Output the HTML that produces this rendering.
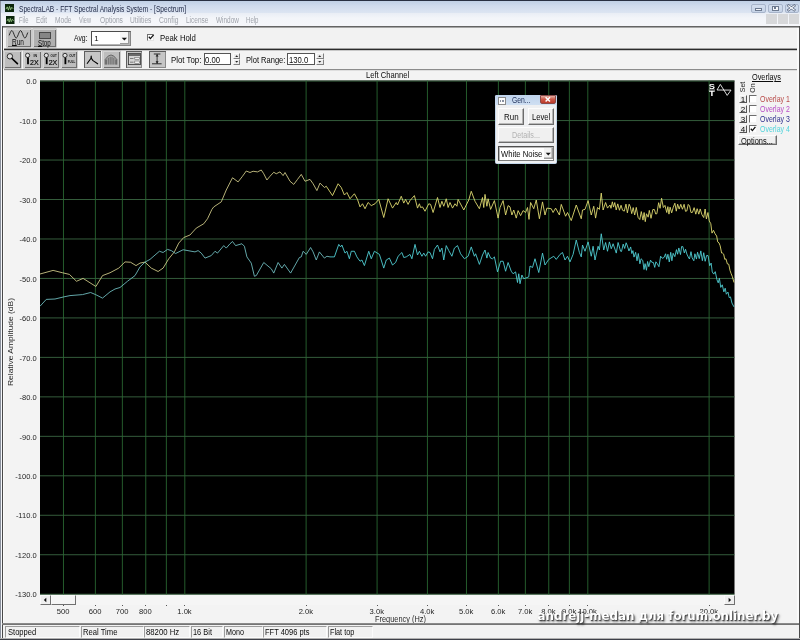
<!DOCTYPE html>
<html>
<head>
<meta charset="utf-8">
<title>SpectraLAB - FFT Spectral Analysis System - [Spectrum]</title>
<style>
html,body{margin:0;padding:0;}
body{width:800px;height:640px;overflow:hidden;background:#f3f3f3;position:relative;font-family:"Liberation Sans",sans-serif;font-size:8px;color:#222;}
#root{position:absolute;left:0;top:0;width:800px;height:640px;overflow:hidden;will-change:transform;}
.abs{position:absolute;}
.t{position:absolute;white-space:nowrap;line-height:10px;}
u{text-underline-offset:0.3px;text-decoration-thickness:0.7px;}
.btn{position:absolute;background:#bdbdbd;box-shadow:inset 1px 1px 0 #d4d4d4, inset -1px -1px 0 #6e6e6e, 0 0 0 0.5px #a4a4a4;}
.inp{position:absolute;background:#fff;border:1px solid #555;box-sizing:border-box;}
.st{position:absolute;top:626px;height:11.8px;box-sizing:border-box;border:1px solid;border-color:#9c9c9c #fbfbfb #fbfbfb #9c9c9c;background:#f1f1f1;}
.nb{position:absolute;left:739px;width:8px;height:7.5px;box-sizing:border-box;border:1px solid;border-color:#fafafa #555 #555 #fafafa;background:#ececec;}
.cb{position:absolute;left:749px;width:8px;height:7.5px;box-sizing:border-box;border:1px solid;border-color:#6e6e6e #f4f4f4 #f4f4f4 #6e6e6e;background:#fff;}
.gbtn{position:absolute;box-sizing:border-box;border:1px solid;border-color:#fdfdfd #6c6c6c #6c6c6c #fdfdfd;background:#f0f0f0;box-shadow:inset -0.8px -0.8px 0 #a6a6a6;}
</style>
</head>
<body>
<div id="root">
<div class="abs" style="left:0;top:0;width:800px;height:13px;background:linear-gradient(#bccde4,#cfdbed 45%,#dde5f2)"></div><div class="abs" style="left:0;top:0;width:800px;height:1.3px;background:#283042"></div><div class="abs" style="left:0;top:13px;width:800px;height:13px;background:linear-gradient(#e9edf5,#f3f5f9 40%,#f5f6fa)"></div><div class="t" style="left:18.50px;top:3.50px;font-size:8.4px;color:#222b48;transform:scaleX(0.7892);transform-origin:0 0;">SpectraLAB - FFT Spectral Analysis System - [Spectrum]</div><svg class="abs" style="left:4.5px;top:3.5px" width="9" height="8.5" viewBox="0 0 10 9" preserveAspectRatio="none"><rect width="10" height="9" fill="#0b260c"/><path d="M1 5.5 L2.5 3 L3.8 6.5 L5 2.5 L6.2 6 L7.5 3.5 L9 5" fill="none" stroke="#9fd08a" stroke-width="0.9"/></svg><svg class="abs" style="left:6px;top:15.5px" width="8.5" height="8.5" viewBox="0 0 10 9" preserveAspectRatio="none"><rect width="10" height="9" fill="#0b260c"/><path d="M1 5.5 L2.5 3 L3.8 6.5 L5 2.5 L6.2 6 L7.5 3.5 L9 5" fill="none" stroke="#9fd08a" stroke-width="0.9"/></svg><div class="t" style="left:18.50px;top:15.10px;font-size:8.4px;color:#9fa3ab;transform:scaleX(0.7019);transform-origin:0 0;">File</div><div class="t" style="left:36.00px;top:15.10px;font-size:8.4px;color:#9fa3ab;transform:scaleX(0.7600);transform-origin:0 0;">Edit</div><div class="t" style="left:54.50px;top:15.10px;font-size:8.4px;color:#9fa3ab;transform:scaleX(0.7853);transform-origin:0 0;">Mode</div><div class="t" style="left:78.50px;top:15.10px;font-size:8.4px;color:#9fa3ab;transform:scaleX(0.6646);transform-origin:0 0;">View</div><div class="t" style="left:99.50px;top:15.10px;font-size:8.4px;color:#9fa3ab;transform:scaleX(0.7946);transform-origin:0 0;">Options</div><div class="t" style="left:130.00px;top:15.10px;font-size:8.4px;color:#9fa3ab;transform:scaleX(0.7942);transform-origin:0 0;">Utilities</div><div class="t" style="left:158.80px;top:15.10px;font-size:8.4px;color:#9fa3ab;transform:scaleX(0.8031);transform-origin:0 0;">Config</div><div class="t" style="left:185.50px;top:15.10px;font-size:8.4px;color:#9fa3ab;transform:scaleX(0.7772);transform-origin:0 0;">License</div><div class="t" style="left:215.50px;top:15.10px;font-size:8.4px;color:#9fa3ab;transform:scaleX(0.7699);transform-origin:0 0;">Window</div><div class="t" style="left:246.00px;top:15.10px;font-size:8.4px;color:#9fa3ab;transform:scaleX(0.7236);transform-origin:0 0;">Help</div><div class="abs" style="left:751px;top:3.5px;width:15px;height:9px;border-radius:2px;background:linear-gradient(#d3deee,#c6d3e7);border:1px solid #a7b4ca;box-sizing:border-box"></div><div class="abs" style="left:767.5px;top:3.5px;width:15px;height:9px;border-radius:2px;background:linear-gradient(#d3deee,#c6d3e7);border:1px solid #a7b4ca;box-sizing:border-box"></div><div class="abs" style="left:784.5px;top:3.5px;width:14.5px;height:9px;border-radius:2px;background:linear-gradient(#d3deee,#c6d3e7);border:1px solid #a7b4ca;box-sizing:border-box"></div><div class="abs" style="left:755px;top:8px;width:7px;height:2.5px;box-sizing:border-box;border:0.8px solid #6d7a90;background:#f4f6fa"></div><div class="abs" style="left:771.5px;top:5.5px;width:7px;height:5px;box-sizing:border-box;border:0.8px solid #6d7a90;background:#f4f6fa"></div><div class="abs" style="left:774px;top:7px;width:2px;height:2px;background:#6d7a90"></div><svg class="abs" style="left:784px;top:3px" width="16" height="10" viewBox="784 3 16 10"><path d="M788.600000 5.8 L794.2 10 M794.2 5.8 L788.6 10" stroke="#5d6a82" stroke-width="2.6" stroke-linecap="square"/><path d="M788.600000 5.8 L794.200000 10 M794.200000 5.800000 L788.600000 10" stroke="#f6f8fb" stroke-width="1.1" stroke-linecap="square"/></svg><div class="abs" style="left:766.3px;top:14.4px;width:10.6px;height:9.8px;background:#d7d8da"></div><div class="abs" style="left:777.5px;top:14.4px;width:10.6px;height:9.8px;background:#d7d8da"></div><div class="abs" style="left:788.8px;top:14.4px;width:10.6px;height:9.8px;background:#d7d8da"></div><div class="abs" style="left:3px;top:27px;width:796px;height:22px;background:#f2f2f2"></div>
<div class="abs" style="left:3px;top:50px;width:796px;height:19px;background:#f3f3f3"></div>
<div class="abs" style="left:2px;top:26px;width:797px;height:1px;background:#646464"></div>
<div class="abs" style="left:3px;top:27px;width:796px;height:1px;background:#a6a6a6"></div>
<div class="abs" style="left:3px;top:48px;width:796px;height:1px;background:#a2a2a2"></div>
<div class="abs" style="left:2px;top:49px;width:797px;height:1px;background:#2c2c2c"></div>
<div class="abs" style="left:3px;top:50px;width:796px;height:1px;background:#c8c8c8"></div>
<div class="abs" style="left:2px;top:69px;width:797px;height:1px;background:#8c8c8c"></div>
<div class="abs" style="left:3px;top:70px;width:796px;height:1px;background:#dedede"></div>
<div class="abs" style="left:0;top:1px;width:1px;height:639px;background:#8a909c"></div>
<div class="abs" style="left:1px;top:13px;width:1px;height:627px;background:#f4f6fa"></div>
<div class="abs" style="left:2px;top:26px;width:1px;height:614px;background:#484848"></div>
<div class="abs" style="left:3px;top:28px;width:1px;height:595px;background:#fbfbfb"></div>
<div class="abs" style="left:797px;top:28px;width:2px;height:595px;background:#fafafa"></div>
<div class="abs" style="left:799px;top:26px;width:1px;height:614px;background:#4a4a4a"></div>
<div class="btn" style="left:6.8px;top:28.5px;width:24px;height:18.8px"></div><svg class="abs" style="left:0;top:26px" width="40" height="24" viewBox="0 26 40 24"><path d="M9.2 35.35 L9.8 33.77 L10.4 32.29 L11.0 31.18 L11.6 30.63 L12.2 30.76 L12.8 31.54 L13.4 32.82 L14.0 34.37 L14.6 35.91 L15.2 37.15 L15.8 37.88 L16.4 37.95 L17.0 37.35 L17.6 36.20 L18.2 34.70 L18.8 33.13 L19.4 31.77 L20.0 30.87 L20.6 30.60 L21.2 31.01 L21.8 32.02 L22.4 33.44 L23.0 35.03 L23.6 36.47 L24.2 37.53 L24.8 37.99 L25.4 37.78 L26.0 36.93 L26.6 35.60 L27.2 34.03 L27.8 32.52" fill="none" stroke="#1a1a1a" stroke-width="0.9" stroke-linejoin="round"/></svg><div class="t" style="left:12.20px;top:37.00px;font-size:8.4px;color:#0c0c0c;transform:scaleX(0.7788);transform-origin:0 0;"><u>R</u>un</div><div class="btn" style="left:33.2px;top:28.5px;width:22.8px;height:18.8px;background:#b0b0b0"></div><div class="abs" style="left:39.3px;top:31.8px;width:11.5px;height:6.8px;background:#858585;border:1px solid #484848;box-sizing:border-box"></div><div class="t" style="left:38.00px;top:37.60px;font-size:8.4px;color:#0c0c0c;transform:scaleX(0.7408);transform-origin:0 0;"><u>S</u>top</div><div class="t" style="left:74.40px;top:32.80px;font-size:8.4px;color:#0c0c0c;transform:scaleX(0.8165);transform-origin:0 0;">Avg:</div><div class="inp" style="left:91px;top:31px;width:40px;height:15px;border:1px solid;border-color:#4c4c4c #868686 #868686 #4c4c4c;box-shadow:inset -1px -1px 0 #b4b4b4"></div><div class="t" style="left:94.30px;top:33.60px;font-size:7.8px;color:#0c0c0c;">1</div><div class="abs" style="left:120px;top:32px;width:9px;height:12px;background:#f6f6f6;box-shadow:inset -1px -1px 0 #9a9a9a"></div><svg class="abs" style="left:121px;top:36.5px" width="7" height="5"><path d="M0.7 0.8 L6 0.8 L3.35 3.6 Z" fill="#111"/></svg><div class="abs" style="left:147px;top:33.7px;width:7px;height:7px;background:#fff;border:1px solid;border-color:#707070 #e4e4e4 #e4e4e4 #707070;box-sizing:border-box"></div><svg class="abs" style="left:147px;top:33px" width="8" height="8"><path d="M1.8 3.8 L3.4 5.6 L6.6 1.8" fill="none" stroke="#111" stroke-width="1.3"/></svg><div class="t" style="left:159.50px;top:32.80px;font-size:8.4px;color:#0c0c0c;transform:scaleX(0.9289);transform-origin:0 0;">Peak Hold</div><div class="btn" style="left:4.4px;top:50.8px;width:16.6px;height:17px;"></div><div class="btn" style="left:23.8px;top:50.8px;width:16.8px;height:17px;"></div><div class="btn" style="left:42.5px;top:50.8px;width:16.3px;height:17px;"></div><div class="btn" style="left:61.2px;top:50.8px;width:16.3px;height:17px;"></div><div class="btn" style="left:84.4px;top:50.8px;width:16.2px;height:17px;background:#c6c6c6;box-shadow:inset 1px 1px 0 #5e5e5e, inset -1px -1px 0 #8a8a8a;"></div><div class="btn" style="left:103px;top:50.8px;width:17px;height:17px;"></div><div class="btn" style="left:125.6px;top:50.8px;width:16.9px;height:17px;background:#c6c6c6;box-shadow:inset 1px 1px 0 #5e5e5e, inset -1px -1px 0 #8a8a8a;"></div><div class="btn" style="left:149.4px;top:50.8px;width:16.9px;height:17px;background:#c6c6c6;box-shadow:inset 1px 1px 0 #5e5e5e, inset -1px -1px 0 #8a8a8a;"></div><svg class="abs" style="left:0;top:46px" width="170" height="28" viewBox="0 46 170 28"><circle cx="9.9" cy="56.3" r="2.7" fill="#dedede" stroke="#1c1c1c" stroke-width="0.9"/><path d="M12 58.5 L17.4 63.6" stroke="#000" stroke-width="1.7" stroke-linecap="round"/><circle cx="27.6" cy="55.4" r="2.1" fill="#e2e2e2" stroke="#1c1c1c" stroke-width="0.85"/><path d="M28.0 57.6 V64.2" stroke="#000" stroke-width="1.8"/><text x="33.6" y="57.3" font-family="Liberation Sans,sans-serif" font-weight="bold" font-size="3.8" fill="#111" textLength="3.6" lengthAdjust="spacingAndGlyphs">IN</text><text x="30.0" y="64.6" font-family="Liberation Sans,sans-serif" font-size="6.8" fill="#000" stroke="#000" stroke-width="0.15" textLength="8.6" lengthAdjust="spacingAndGlyphs">2X</text><circle cx="46.3" cy="55.4" r="2.1" fill="#e2e2e2" stroke="#1c1c1c" stroke-width="0.85"/><path d="M46.699999999999996 57.6 V64.2" stroke="#000" stroke-width="1.8"/><text x="50.5" y="57.3" font-family="Liberation Sans,sans-serif" font-weight="bold" font-size="3.8" fill="#111" textLength="6.2" lengthAdjust="spacingAndGlyphs">OUT</text><text x="48.7" y="64.6" font-family="Liberation Sans,sans-serif" font-size="6.8" fill="#000" stroke="#000" stroke-width="0.15" textLength="8.6" lengthAdjust="spacingAndGlyphs">2X</text><circle cx="65.0" cy="55.4" r="2.1" fill="#e2e2e2" stroke="#1c1c1c" stroke-width="0.85"/><path d="M65.4 57.6 V64.2" stroke="#000" stroke-width="1.8"/><text x="69.2" y="57.3" font-family="Liberation Sans,sans-serif" font-weight="bold" font-size="3.8" fill="#111" textLength="6.2" lengthAdjust="spacingAndGlyphs">OUT</text><text x="67.8" y="62.6" font-family="Liberation Sans,sans-serif" font-weight="bold" font-size="3.8" fill="#111" textLength="7.6" lengthAdjust="spacingAndGlyphs">FULL</text><path d="M87 63.8 L91 58.2 L91.2 56 L91.4 58.4 L93 60.6 L98 64" fill="none" stroke="#000" stroke-width="1.1" stroke-linejoin="round"/><path d="M106.30 64.6V59.36M108.20 64.6V57.57M110.10 64.6V56.54M112.00 64.6V56.54M113.90 64.6V57.57M115.80 64.6V59.36" stroke="#3a3a3a" stroke-width="0.75"/><path d="M105.2 64.6 V59.5 Q111 50.500000 116.800000 59.500000 V64.6" fill="none" stroke="#3a3a3a" stroke-width="0.7"/><rect x="128.4" y="53.4" width="12.2" height="11.2" fill="#d4d4d4" stroke="#333" stroke-width="0.8"/><rect x="129" y="54" width="11" height="2" fill="#6a6a6a"/><rect x="134.8" y="57.3" width="4.6" height="2.4" fill="#eee" stroke="#555" stroke-width="0.5"/><rect x="134.800000" y="61" width="4.6" height="2.4" fill="#eee" stroke="#555" stroke-width="0.5"/><path d="M130 58.5 H133.5 M130 62.2 H133.5" stroke="#666" stroke-width="0.8"/><path d="M153.8 54 H160.4 M152 63.8 H161.6" stroke="#1c1c1c" stroke-width="0.9"/><path d="M157.1 54 V63.8" stroke="#1c1c1c" stroke-width="0.8"/><path d="M155.6 56.6 L157.1 54.4 L158.6 56.6 Z M155.6 61.2 L157.1 63.4 L158.6 61.2 Z" fill="#1c1c1c"/></svg><div class="t" style="left:171.30px;top:54.50px;font-size:8.4px;color:#0c0c0c;transform:scaleX(0.9345);transform-origin:0 0;">Plot Top:</div><div class="inp" style="left:203.9px;top:53px;width:27.6px;height:12px"></div><div class="t" style="left:205.30px;top:54.50px;font-size:8.4px;color:#0c0c0c;transform:scaleX(0.9176);transform-origin:0 0;">0.00</div><div class="t" style="left:245.50px;top:54.50px;font-size:8.4px;color:#0c0c0c;transform:scaleX(0.8999);transform-origin:0 0;">Plot Range:</div><div class="inp" style="left:287px;top:53px;width:28px;height:12px"></div><div class="t" style="left:288.70px;top:54.50px;font-size:8.4px;color:#0c0c0c;transform:scaleX(0.9182);transform-origin:0 0;">130.0</div><div class="abs" style="left:232.5px;top:53px;width:7.5px;height:6px;box-sizing:border-box;border:1px solid;border-color:#fafafa #808080 #808080 #fafafa;background:#ececec"></div><div class="abs" style="left:232.5px;top:59px;width:7.5px;height:6px;box-sizing:border-box;border:1px solid;border-color:#fafafa #808080 #808080 #fafafa;background:#ececec"></div><svg class="abs" style="left:232.5px;top:53px" width="8" height="12"><path d="M2.2 4 L5.2 4 L3.7 2.3 Z M2.2 8 L5.2 8 L3.7 9.7 Z" fill="#222"/></svg><div class="abs" style="left:316px;top:53px;width:7.5px;height:6px;box-sizing:border-box;border:1px solid;border-color:#fafafa #808080 #808080 #fafafa;background:#ececec"></div><div class="abs" style="left:316px;top:59px;width:7.5px;height:6px;box-sizing:border-box;border:1px solid;border-color:#fafafa #808080 #808080 #fafafa;background:#ececec"></div><svg class="abs" style="left:316px;top:53px" width="8" height="12"><path d="M2.2 4 L5.2 4 L3.7 2.3 Z M2.2 8 L5.2 8 L3.7 9.7 Z" fill="#222"/></svg><div class="t" style="left:365.60px;top:69.50px;font-size:8.4px;color:#0c0c0c;transform:scaleX(0.9112);transform-origin:0 0;">Left Channel</div><svg class="abs" id="plot" style="left:40px;top:80px" width="696" height="516" viewBox="40 80 696 516">
<rect x="40" y="80.5" width="694.5" height="513.9" fill="#000"/>
<path d="M40 81.10H734.5M40 120.57H734.5M40 160.04H734.5M40 199.51H734.5M40 238.98H734.5M40 278.45H734.5M40 317.92H734.5M40 357.39H734.5M40 396.86H734.5M40 436.33H734.5M40 475.80H734.5M40 515.27H734.5M40 554.74H734.5M40 594.21H734.5" fill="none" stroke="#3a6642" stroke-width="0.9"/>
<path d="M63.48 80.5V594.4M95.39 80.5V594.4M122.37 80.5V594.4M145.75 80.5V594.4M166.36 80.5V594.4M184.80 80.5V594.4M306.12 80.5V594.4M377.08 80.5V594.4M427.43 80.5V594.4M466.48 80.5V594.4M498.39 80.5V594.4M525.37 80.5V594.4M548.75 80.5V594.4M569.36 80.5V594.4M587.80 80.5V594.4M709.12 80.5V594.4" fill="none" stroke="#2a6c34" stroke-width="0.85"/>
<path d="M40 274 53.1 270.4 62.5 272.75 69.4 274.4 76.5 281.25 83.1 278.4 95.9 286.5 102.5 275.6 110 272.75 118.75 268.1 125 261.9 130.6 262.25 136 265.6 140 263.1 145 262.1 151.25 268.1 158.1 271.5 163.1 268.1 168.75 258.75 174.4 251.9 178.75 243.1 183.75 237.5 190 235 196.25 228.1 203.75 223.75 207.5 218.75 211.9 209.4 213.75 206.9 221.25 201.9 226.25 190 232.5 177.75 238.1 181.9 242.5 176.25 246.25 171 250 172.5 253.1 171.25 257.5 171.9 261.25 170 263.75 173.75 266.9 180 270 176.25 273.75 172.25 276.25 173.75 280 171.9 283.1 175.6 285 172.5 290 181.25 293.75 184.4 297.5 179.4 301.25 174.4 305 181.25 310 179.4 313.1 183.75 316.9 190.6 320 183.1 324.4 187.5 326.25 186.25" fill="none" stroke="#d6d08c" stroke-width="0.85" stroke-linejoin="round"/>
<path d="M326.25 186.25 332.5 195.6 338.1 183.75 341.25 187.5 344.4 195 346.9 192.5 350 198.75 354.4 193.75 357.5 199.4 360 206.9 362.5 203.75 365 208.75 368.1 202.5 371.25 205.6 375 203.75 378.75 199.4 383.75 217.5 388.1 198.75 392.5 208.1 396.25 202.5 397.5 205 401.25 196.25 403.75 203.1 405.6 199.4 408.1 204.4 410 200.6 414.4 195.6 417.5 208.1 419.4 203.75 420.6 207.5 422.5 206.9 425 211.25 428.75 203.75 430.6 204.4 433.1 212.5 437.5 197.5 440 207.5 441.9 201.25 443.75 206.25 446.25 198.75 448.1 207.5 450 202.5 452.5 208.1 455 203.75 456.9 206.25 458.1 199.4 463.75 210 468.75 200 471.25 191.25 475 201.25 479.4 208.75 482.5 197.5 483.75 207.5 485 194.4 486.9 206.25 488.1 198.75 490.6 209.4 494.4 200.6 498.1 218.1 500 207.5 503.1 200.6 505.6 215 508.1 205.6 510 206.9 511.9 215 513.75 210 516.25 218.1 518.1 210.6 520.6 215.6 523.1 210.6 525.6 212.5 527.5 207.5 529 219.4 530.6 202.5 533.75 208.75 536.25 200 539.4 218.75 542.5 201.9 545 215 546.9 208.1 551.25 208.75 553.1 212.5 555.6 208.1 559.4 215 561.25 204.4 565.6 216.25 567.5 212.5 571.25 220.6 576.25 205 581.25 218.75 582.5 210 585 209.4 588.1 200.6 591.25 215 593.75 206.25 595.6 218.1 597.5 207.5 599.4 209.4 601.25 193.1 603.1 210 605.6 202.5 607.5 208.1 610 205 611 208.32 612.36 201.82 613.49 207.09 614.77 202.54 616.19 209.95 617.75 203.86 619.46 210.24 621.04 205.25 622.55 210.24 624.27 211.14 625.99 204.13 627.37 212.83 629.13 204.22 630.32 206.7 631.72 213.65 633.18 207.58 634.69 214.99 636.27 207.42 638.08 217.39 639.79 219.54 641.29 211.57 642.98 220.1 644.11 212.53 645.26 221.67 646.46 213.77 648.18 217.17 649.3 210.4 651.03 218.32 652.84 209.54 654.36 209.53 655.74 213.99 656.86 213.71 658.64 202.69 660.07 208.31 661.59 198.26 663.35 207.56 664.96 205.4 666.76 212.5 667.86 206.61 668.96 214.13 670.09 207.16 671.67 212.89 673.29 207.2 674.87 203.2 676.29 211.16 677.64 204.18 679.16 209.06 680.81 204.32 682.43 209.24 684.1 204.29 685.5 211.32 686.82 210.93 688.23 204.41 689.56 205.87 690.97 212.48 692.44 212.37 694.14 207.65 695.81 214.16 697.15 208.69 698.81 214.16 700.2 208.94 701.96 214.75 703.73 217.54 705.13 209.01 706.38 218.96 707.95 212.52 709.28 220.96 710.8 223.68 712 233.11 713.49 230.36 715.07 233.78 716.65 236.01 717.7 241.89 719.03 242.91 720.15 245.72 721.62 253.04 722.69 253.17 723.66 254.11 724.78 259.34 725.94 258.84 727.36 263.91 728.78 264.26 729.95 270.2 731.02 273.34 732.39 276.69 734 282.5" fill="none" stroke="#dfd970" stroke-width="0.9" stroke-linejoin="round"/>
<path d="M40 306.25 46.25 299.4 55 299 63.75 296.9 70 295.6 82.5 294.6 90.6 292.5 95.6 294.6 102.5 298.1 110 291.9 115 289 120 287.5 127.5 281.25 135 275.6 140 266.9 145 262.1 150 259.4 159.4 251.25 163.1 252.5 167.5 249.4 171.25 250.6 175.6 253.5 183.1 249.75 190 251 195 251.9 198.1 250.6 201.25 253.1 205 258.1 211.25 255.6 215 251.25 217.5 253.1 223.75 245.6 226.25 248.1 230 243.75 232.5 241.5 235.6 245.6 241.9 243.75 244.4 246.25 246.9 256.9 251.25 263.1 254.4 276.25 256.25 275.6 263.75 262.5 271.25 268.75 273.75 273.1 278.1 262.5 281.9 268.1 284.4 264.4 290.6 273.1 299.4 257.5 301.25 256.9 303.1 251.25 306.25 254.4 310.6 247.5 313.1 251.9 316.25 260 319.4 251.9 324.4 258.1 326.9 256.25 330 256.9" fill="none" stroke="#74c4c6" stroke-width="0.85" stroke-linejoin="round"/>
<path d="M330 256.9 334.4 256.9 338.75 244.4 340.6 246.9 341.9 245 345 253.1 346.9 251.25 349.4 258.75 351.25 251.25 354.4 251.25 356.9 256.9 360 261.25 361.9 260 364.4 265.6 368.75 251.25 371.25 258.75 374.4 251.25 379.4 254.4 383.75 268.1 386.25 260 389.4 258.1 392.5 265 395.6 262.5 398.1 256.25 401.9 252.5 403.75 257.5 406.25 256.9 410 254.4 411.9 258.75 415 244.4 417.5 255 419.4 251.25 421.9 256.25 423.75 253.1 425.6 256.25 428.1 251.9 430 252.5 432.5 258.75 434.4 249.4 437.5 245 440 251.9 441.9 248.1 443.75 260 446.25 245.6 448.75 250.6 451.9 256.25 454.4 248.1 457.5 245.6 460.6 253.75 464.4 258.75 468.1 256.25 471.25 246.9 474.4 256.25 475.6 253.75 479.4 264.4 482.5 255 485 250 486.9 258.1 488.1 252.5 490.6 258.1 492.5 258.75 494.4 256.9 497.5 271.9 500.6 261.25 503.1 261.25 505.6 271.25 508.1 262.5 511.25 271.25 513.1 273.75 515.6 271.9 517.5 282.5 518.75 273.75 520 283.75 521.9 275 523.75 278.75 525.6 278.1 528.75 276.9 530 266 532.5 267.5 535 258.75 538.75 272.5 542.5 253.1 545 265 548.75 259.4 553.75 256.25 556.25 259.4 560 254.4 562.5 252.5 565 260 567.5 256.25 570 261.9 573.1 254.4 576.25 240 579.4 252.5 581.25 256.9 582.5 245 585 251.25 588.1 241.9 591.25 256.25 593.1 246.25 595 260 598.1 246.25 599.4 250 601.25 233.75 603.75 250 605.6 242.5 607.5 251.25 609.4 241.9 611.25 248.75 613.1 243.75 616.25 253.1 618.1 242.5 620.6 251.25 621.5 251.48 623.2 244.1 624.66 248.49 626.15 242.77 627.41 245.97 628.95 250.97 630.67 246.95 631.83 253.56 632.92 250.65 634 257.12 635.63 252.34 637.03 260.78 638.28 253.49 639.92 263.81 641.13 258.77 642.71 260.33 644.04 269.51 645.09 263.64 646.46 270.25 647.57 261.5 648.8 266.68 650.53 260.11 651.75 262.24 653.36 262.49 654.72 267.42 655.86 261.81 657.21 263.57 658.94 266.73 660.61 256.2 662.26 258.27 664 257.54 665.59 253.77 666.69 259.31 667.91 254.28 669.28 261.96 670.73 252.32 671.89 260.76 673.11 253.3 674.82 256.67 676.49 249.64 677.61 254.24 678.83 247.96 680.46 254.56 681.63 246.51 682.84 246.64 684.32 252.92 685.51 249.23 686.87 254.05 688.18 256.83 689.48 259 690.99 251.66 692.14 257.86 693.83 260.78 694.89 253.78 696.46 259.08 697.56 252.2 699.24 258.6 700.84 250.89 702.37 260.68 703.72 252.71 705.17 261.29 706.62 255.44 708.12 255.65 709.68 265.72 711.14 263.07 712.25 271.92 713.72 274.1 715.26 271.67 716.95 279.73 718.21 282.85 719.38 278.24 720.74 287.42 722.26 284.82 723.87 291.88 725.19 288.21 726.33 294.23 727.98 292.07 729.22 297.65 730.47 296.88 731.95 303.05 734 306.9" fill="none" stroke="#50cdd3" stroke-width="0.9" stroke-linejoin="round"/>
</svg><svg class="abs" style="left:700px;top:80px" width="36" height="20" viewBox="700 80 36 20"><text x="708.8" y="88.9" font-family="Liberation Sans,sans-serif" font-weight="bold" font-size="6.6" fill="#fff" textLength="6.2" lengthAdjust="spacingAndGlyphs">S</text><path d="M708.8 90.1 H715" stroke="#fff" stroke-width="0.8"/><text x="709" y="95.6" font-family="Liberation Sans,sans-serif" font-weight="bold" font-size="6.6" fill="#fff" textLength="5.8" lengthAdjust="spacingAndGlyphs">T</text><path d="M717 90 L720.3 84.400000 L727.2 95.4 L731 90.1 Z" fill="none" stroke="#fff" stroke-width="0.85" stroke-linejoin="miter"/></svg><div class="t" style="left:26.18px;top:77.30px;font-size:7.5px;color:#1e1e1e;">0.0</div><div class="t" style="left:19.51px;top:116.77px;font-size:7.5px;color:#1e1e1e;">-10.0</div><div class="t" style="left:19.51px;top:156.24px;font-size:7.5px;color:#1e1e1e;">-20.0</div><div class="t" style="left:19.51px;top:195.71px;font-size:7.5px;color:#1e1e1e;">-30.0</div><div class="t" style="left:19.51px;top:235.18px;font-size:7.5px;color:#1e1e1e;">-40.0</div><div class="t" style="left:19.51px;top:274.65px;font-size:7.5px;color:#1e1e1e;">-50.0</div><div class="t" style="left:19.51px;top:314.12px;font-size:7.5px;color:#1e1e1e;">-60.0</div><div class="t" style="left:19.51px;top:353.59px;font-size:7.5px;color:#1e1e1e;">-70.0</div><div class="t" style="left:19.51px;top:393.06px;font-size:7.5px;color:#1e1e1e;">-80.0</div><div class="t" style="left:19.51px;top:432.53px;font-size:7.5px;color:#1e1e1e;">-90.0</div><div class="t" style="left:15.34px;top:472.00px;font-size:7.5px;color:#1e1e1e;">-100.0</div><div class="t" style="left:15.89px;top:511.47px;font-size:7.5px;color:#1e1e1e;">-110.0</div><div class="t" style="left:15.34px;top:550.94px;font-size:7.5px;color:#1e1e1e;">-120.0</div><div class="t" style="left:15.34px;top:590.41px;font-size:7.5px;color:#1e1e1e;">-130.0</div><div class="t" style="left:10.6px;top:342px;font-size:7.6px;color:#2a2a2a;transform:translate(-50%,-50%) rotate(-90deg) scaleX(1.1082)">Relative Amplitude (dB)</div><div class="t" style="left:56.85px;top:607.00px;font-size:7.6px;color:#1e1e1e;">500</div><div class="t" style="left:88.76px;top:607.00px;font-size:7.6px;color:#1e1e1e;">600</div><div class="t" style="left:115.74px;top:607.00px;font-size:7.6px;color:#1e1e1e;">700</div><div class="t" style="left:139.11px;top:607.00px;font-size:7.6px;color:#1e1e1e;">800</div><div class="t" style="left:177.32px;top:607.00px;font-size:7.6px;color:#1e1e1e;">1.0k</div><div class="t" style="left:298.63px;top:607.00px;font-size:7.6px;color:#1e1e1e;">2.0k</div><div class="t" style="left:369.60px;top:607.00px;font-size:7.6px;color:#1e1e1e;">3.0k</div><div class="t" style="left:419.95px;top:607.00px;font-size:7.6px;color:#1e1e1e;">4.0k</div><div class="t" style="left:459.00px;top:607.00px;font-size:7.6px;color:#1e1e1e;">5.0k</div><div class="t" style="left:490.91px;top:607.00px;font-size:7.6px;color:#1e1e1e;">6.0k</div><div class="t" style="left:517.89px;top:607.00px;font-size:7.6px;color:#1e1e1e;">7.0k</div><div class="t" style="left:541.26px;top:607.00px;font-size:7.6px;color:#1e1e1e;">8.0k</div><div class="t" style="left:561.88px;top:607.00px;font-size:7.6px;color:#1e1e1e;">9.0k</div><div class="t" style="left:578.20px;top:607.00px;font-size:7.6px;color:#1e1e1e;">10.0k</div><div class="t" style="left:699.52px;top:607.00px;font-size:7.6px;color:#1e1e1e;">20.0k</div><div class="abs" style="left:63.0px;top:605px;width:1px;height:1.3px;background:#555"></div><div class="abs" style="left:94.9px;top:605px;width:1px;height:1.3px;background:#555"></div><div class="abs" style="left:121.9px;top:605px;width:1px;height:1.3px;background:#555"></div><div class="abs" style="left:145.2px;top:605px;width:1px;height:1.3px;background:#555"></div><div class="abs" style="left:165.9px;top:605px;width:1px;height:1.3px;background:#555"></div><div class="abs" style="left:184.3px;top:605px;width:1px;height:1.3px;background:#555"></div><div class="abs" style="left:305.6px;top:605px;width:1px;height:1.3px;background:#555"></div><div class="abs" style="left:376.6px;top:605px;width:1px;height:1.3px;background:#555"></div><div class="abs" style="left:426.9px;top:605px;width:1px;height:1.3px;background:#555"></div><div class="abs" style="left:466.0px;top:605px;width:1px;height:1.3px;background:#555"></div><div class="abs" style="left:497.9px;top:605px;width:1px;height:1.3px;background:#555"></div><div class="abs" style="left:524.9px;top:605px;width:1px;height:1.3px;background:#555"></div><div class="abs" style="left:548.2px;top:605px;width:1px;height:1.3px;background:#555"></div><div class="abs" style="left:568.9px;top:605px;width:1px;height:1.3px;background:#555"></div><div class="abs" style="left:587.3px;top:605px;width:1px;height:1.3px;background:#555"></div><div class="abs" style="left:708.6px;top:605px;width:1px;height:1.3px;background:#555"></div><div class="t" style="left:375.00px;top:613.70px;font-size:8.4px;color:#2a2a2a;transform:scaleX(0.8812);transform-origin:0 0;">Frequency (Hz)</div><div class="abs" style="left:40px;top:594.5px;width:694.5px;height:10.3px;background:#f5f5f5"></div><div class="abs" style="left:40px;top:594.7px;width:11px;height:10px;box-sizing:border-box;border:1px solid;border-color:#fafafa #707070 #707070 #fafafa;background:#efefef"></div><svg class="abs" style="left:40px;top:594.7px" width="11" height="10"><path d="M6.3 2.8 L6.3 7.2 L3.8 5 Z" fill="#111"/></svg><div class="abs" style="left:51px;top:594.7px;width:24.5px;height:10px;box-sizing:border-box;border:1px solid;border-color:#fafafa #707070 #707070 #fafafa;background:#f5f5f5"></div><div class="abs" style="left:723.5px;top:594.7px;width:11px;height:10px;box-sizing:border-box;border:1px solid;border-color:#fafafa #707070 #707070 #fafafa;background:#efefef"></div><svg class="abs" style="left:723.5px;top:594.7px" width="11" height="10"><path d="M4.6 2.8 L4.6 7.2 L7.1 5 Z" fill="#111"/></svg><div class="t" style="left:752.00px;top:72.20px;font-size:8.4px;color:#0c0c0c;transform:scaleX(0.8751);transform-origin:0 0;text-decoration:underline;">Overlays</div><div class="t" style="left:743.2px;top:86.6px;font-size:7px;transform:translate(-50%,-50%) rotate(-90deg)">Set</div><div class="t" style="left:752.5px;top:87.6px;font-size:7px;transform:translate(-50%,-50%) rotate(-90deg)">On</div><div class="nb" style="top:95.20px"></div><div class="t" style="left:740.78px;top:94.90px;font-size:8px;color:#000;">1</div><div class="cb" style="top:95.20px"></div><div class="t" style="left:759.80px;top:93.90px;font-size:8.4px;color:#b84a48;transform:scaleX(0.8318);transform-origin:0 0;">Overlay 1</div><div class="nb" style="top:105.15px"></div><div class="t" style="left:740.78px;top:104.85px;font-size:8px;color:#000;">2</div><div class="cb" style="top:105.15px"></div><div class="t" style="left:759.80px;top:103.85px;font-size:8.4px;color:#b84cc6;transform:scaleX(0.8318);transform-origin:0 0;">Overlay 2</div><div class="nb" style="top:115.10px"></div><div class="t" style="left:740.78px;top:114.80px;font-size:8px;color:#000;">3</div><div class="cb" style="top:115.10px"></div><div class="t" style="left:759.80px;top:113.80px;font-size:8.4px;color:#2f2f8e;transform:scaleX(0.8318);transform-origin:0 0;">Overlay 3</div><div class="nb" style="top:125.05px"></div><div class="t" style="left:740.78px;top:124.75px;font-size:8px;color:#000;">4</div><div class="cb" style="top:125.05px"></div><div class="t" style="left:759.80px;top:123.75px;font-size:8.4px;color:#52d4dc;transform:scaleX(0.8318);transform-origin:0 0;">Overlay 4</div><svg class="abs" style="left:749.3px;top:124.6px" width="8" height="8"><path d="M1.8 3.8 L3.4 5.6 L6.4 1.8" fill="none" stroke="#111" stroke-width="1.3"/></svg><div class="gbtn" style="left:737.8px;top:135.2px;width:39px;height:9.8px"></div><div class="t" style="left:741.20px;top:135.50px;font-size:8.4px;color:#0c0c0c;transform:scaleX(0.8874);transform-origin:0 0;">Options...</div><div class="abs" style="left:495.3px;top:94.6px;width:62px;height:69px;background:#eff0f2;border:1px solid #c3d6ea;box-sizing:border-box;border-radius:1.5px"></div><div class="abs" style="left:495.3px;top:94.6px;width:62px;height:10.8px;background:linear-gradient(#bfd3ec,#cfdff2);border-radius:1.5px 1.5px 0 0"></div><div class="abs" style="left:497.8px;top:96.8px;width:8.2px;height:8px;background:#fdfdfd;border:1px solid #8a8a8a;box-sizing:border-box"></div><div class="abs" style="left:499.6px;top:99.6px;width:1.4px;height:2.6px;background:#8890a0"></div><div class="abs" style="left:502.2px;top:99.6px;width:1.4px;height:2.6px;background:#8890a0"></div><div class="t" style="left:512.20px;top:95.30px;font-size:8.4px;color:#25355e;transform:scaleX(0.8130);transform-origin:0 0;">Gen...</div><div class="abs" style="left:540px;top:95.2px;width:15.6px;height:8.6px;background:linear-gradient(#e3b0a4,#cd5a4a 45%,#bd3a2a);border-radius:0 0 2px 2px;border:0.6px solid #8a4a48;box-sizing:border-box"></div><svg class="abs" style="left:540px;top:95.2px" width="16" height="9"><path d="M5.6 2.3 L10 6.5 M10 2.3 L5.600000 6.5" stroke="#fff" stroke-width="1.5"/></svg><div class="gbtn" style="left:498.3px;top:107.6px;width:26px;height:17px"></div><div class="t" style="left:503.60px;top:111.80px;font-size:8.8px;color:#0c0c0c;transform:scaleX(0.9044);transform-origin:0 0;">Run</div><div class="gbtn" style="left:527.5px;top:107.6px;width:26.6px;height:17px"></div><div class="t" style="left:531.70px;top:111.80px;font-size:8.8px;color:#0c0c0c;transform:scaleX(0.8699);transform-origin:0 0;">Level</div><div class="gbtn" style="left:498.3px;top:127.2px;width:55.8px;height:16.2px"></div><div class="t" style="left:511.50px;top:130.10px;font-size:8.8px;color:#b2b2b2;transform:scaleX(0.8150);transform-origin:0 0;">Details...</div><div class="inp" style="left:498px;top:146px;width:56px;height:15px;border:1px solid;border-color:#505050 #7c7c7c #7c7c7c #505050;box-shadow:inset 1px 1px 0 #b8b8b8"></div><div class="abs" style="left:543.5px;top:148px;width:9.3px;height:11.3px;background:#f2f2f2;box-shadow:inset -1.5px -1.5px 0 #9a9a9a"></div><div class="t" style="left:500.70px;top:148.70px;font-size:8.8px;color:#0c0c0c;transform:scaleX(0.8728);transform-origin:0 0;">White Noise</div><svg class="abs" style="left:544.6px;top:151.8px" width="7" height="5"><path d="M0.7 0.8 L5.8 0.8 L3.25 3.5 Z" fill="#111"/></svg><div class="abs" style="left:2px;top:623px;width:797px;height:1px;background:#8a8a8a"></div><div class="abs" style="left:2px;top:624px;width:797px;height:1px;background:#747474"></div><div class="abs" style="left:3px;top:624.8px;width:796px;height:14px;background:#f2f2f2"></div><div class="st" style="left:5px;width:75px"></div><div class="t" style="left:7.75px;top:626.70px;font-size:8.4px;color:#0c0c0c;transform:scaleX(0.9028);transform-origin:0 0;">Stopped</div><div class="st" style="left:81px;width:62.5px"></div><div class="t" style="left:83.00px;top:626.70px;font-size:8.4px;color:#0c0c0c;transform:scaleX(0.9124);transform-origin:0 0;">Real Time</div><div class="st" style="left:144.3px;width:46px"></div><div class="t" style="left:146.30px;top:626.70px;font-size:8.4px;color:#0c0c0c;transform:scaleX(0.9234);transform-origin:0 0;">88200 Hz</div><div class="st" style="left:191px;width:31.5px"></div><div class="t" style="left:193.00px;top:626.70px;font-size:8.4px;color:#0c0c0c;transform:scaleX(0.8846);transform-origin:0 0;">16 Bit</div><div class="st" style="left:223.5px;width:39px"></div><div class="t" style="left:225.80px;top:626.70px;font-size:8.4px;color:#0c0c0c;transform:scaleX(0.8567);transform-origin:0 0;">Mono</div><div class="st" style="left:263.3px;width:64.2px"></div><div class="t" style="left:265.00px;top:626.70px;font-size:8.4px;color:#0c0c0c;transform:scaleX(0.8936);transform-origin:0 0;">FFT 4096 pts</div><div class="st" style="left:328.3px;width:44.5px"></div><div class="t" style="left:329.50px;top:626.70px;font-size:8.4px;color:#0c0c0c;transform:scaleX(0.8675);transform-origin:0 0;">Flat top</div><div class="abs" style="left:0;top:638px;width:800px;height:1px;background:#b0b0b0"></div><div class="abs" style="left:0;top:639px;width:800px;height:1px;background:#3e4048"></div><div class="t" style="left:537.6px;top:606.2px;font-family:'DejaVu Sans',sans-serif;font-weight:bold;font-size:11.8px;line-height:20px;color:#fff;text-shadow:0.8px 0.8px 1px #3a3a3a,1.5px 2px 2.5px rgba(0,0,0,0.55)">andrejj-medan для forum.onliner.by</div></div>
</body>
</html>
